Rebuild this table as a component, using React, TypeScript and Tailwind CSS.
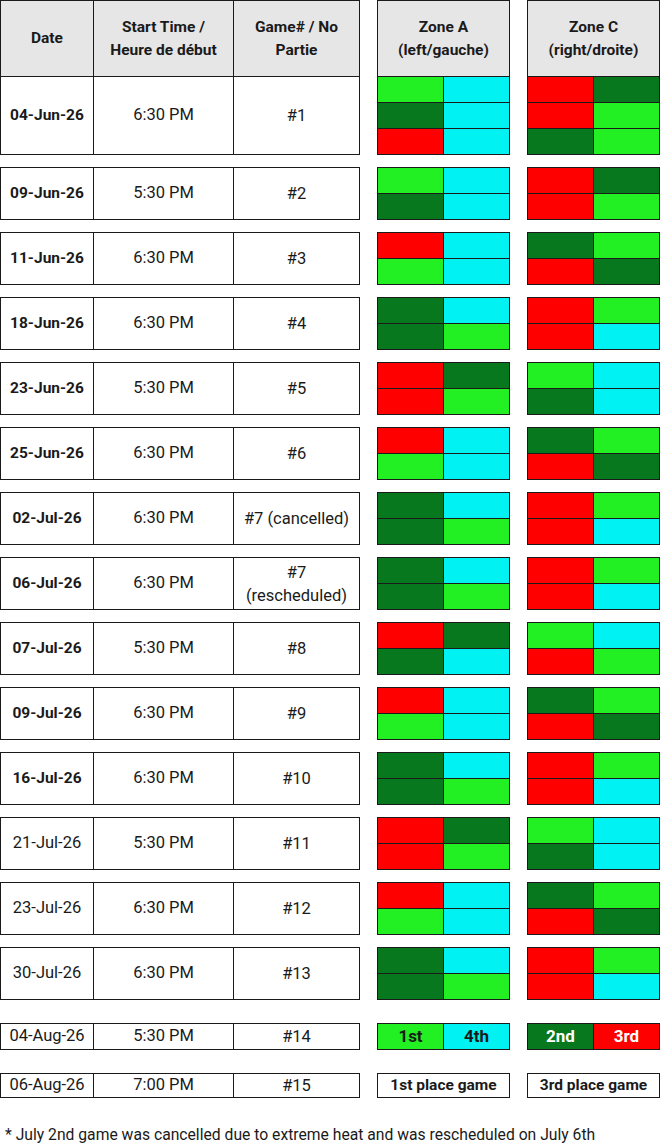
import React from 'react';

type C = 'lg' | 'dg' | 'r' | 'cy';

interface GameRow {
  date: string;
  time: string;
  game: React.ReactNode;
  bold: boolean;
  zoneA: C[][];
  zoneC: C[][];
}

const fill: Record<C, string> = {
  lg: 'bg-[#22f022]',
  dg: 'bg-[#07781e]',
  r: 'bg-[#ff0000]',
  cy: 'bg-[#00f2f2]',
};

const rows: GameRow[] = [
  { date: '09-Jun-26', time: '5:30 PM', game: '#2', bold: true, zoneA: [['lg', 'cy'], ['dg', 'cy']], zoneC: [['r', 'dg'], ['r', 'lg']] },
  { date: '11-Jun-26', time: '6:30 PM', game: '#3', bold: true, zoneA: [['r', 'cy'], ['lg', 'cy']], zoneC: [['dg', 'lg'], ['r', 'dg']] },
  { date: '18-Jun-26', time: '6:30 PM', game: '#4', bold: true, zoneA: [['dg', 'cy'], ['dg', 'lg']], zoneC: [['r', 'lg'], ['r', 'cy']] },
  { date: '23-Jun-26', time: '5:30 PM', game: '#5', bold: true, zoneA: [['r', 'dg'], ['r', 'lg']], zoneC: [['lg', 'cy'], ['dg', 'cy']] },
  { date: '25-Jun-26', time: '6:30 PM', game: '#6', bold: true, zoneA: [['r', 'cy'], ['lg', 'cy']], zoneC: [['dg', 'lg'], ['r', 'dg']] },
  { date: '02-Jul-26', time: '6:30 PM', game: '#7 (cancelled)', bold: true, zoneA: [['dg', 'cy'], ['dg', 'lg']], zoneC: [['r', 'lg'], ['r', 'cy']] },
  {
    date: '06-Jul-26',
    time: '6:30 PM',
    game: (
      <>
        #7
        <br />
        (rescheduled)
      </>
    ),
    bold: true,
    zoneA: [['dg', 'cy'], ['dg', 'lg']],
    zoneC: [['r', 'lg'], ['r', 'cy']],
  },
  { date: '07-Jul-26', time: '5:30 PM', game: '#8', bold: true, zoneA: [['r', 'dg'], ['dg', 'cy']], zoneC: [['lg', 'cy'], ['r', 'lg']] },
  { date: '09-Jul-26', time: '6:30 PM', game: '#9', bold: true, zoneA: [['r', 'cy'], ['lg', 'cy']], zoneC: [['dg', 'lg'], ['r', 'dg']] },
  { date: '16-Jul-26', time: '6:30 PM', game: '#10', bold: true, zoneA: [['dg', 'cy'], ['dg', 'lg']], zoneC: [['r', 'lg'], ['r', 'cy']] },
  { date: '21-Jul-26', time: '5:30 PM', game: '#11', bold: false, zoneA: [['r', 'dg'], ['r', 'lg']], zoneC: [['lg', 'cy'], ['dg', 'cy']] },
  { date: '23-Jul-26', time: '6:30 PM', game: '#12', bold: false, zoneA: [['r', 'cy'], ['lg', 'cy']], zoneC: [['dg', 'lg'], ['r', 'dg']] },
  { date: '30-Jul-26', time: '6:30 PM', game: '#13', bold: false, zoneA: [['dg', 'cy'], ['dg', 'lg']], zoneC: [['r', 'lg'], ['r', 'cy']] },
];

const Zone = ({ grid }: { grid: C[][] }) => (
  <div className="flex flex-col">
    {grid.map((pair, i) => (
      <div key={i} className={`flex h-[25px] ${i > 0 ? 'box-content border-t border-[#1a1a1a]' : ''}`}>
        <div className={`w-[65px] ${fill[pair[0]]}`} />
        <div className={`w-[66px] border-l border-[#1a1a1a] ${fill[pair[1]]}`} />
      </div>
    ))}
  </div>
);

const Cells = ({ date, time, game, bold, h }: { date: string; time: string; game: React.ReactNode; bold: boolean; h: string }) => (
  <div className={`flex ${h}`}>
    <div className={`w-[92px] flex items-center justify-center ${bold ? 'font-bold text-[15.5px]' : 'text-[16.5px]'}`}>{date}</div>
    <div className="w-[140px] border-l border-[#1a1a1a] flex items-center justify-center">{time}</div>
    <div className="w-[126px] border-l border-[#1a1a1a] flex items-center justify-center text-center leading-[23px]">{game}</div>
  </div>
);

export default function App() {
  return (
    <div
      className="w-[666px] min-h-[1146px] bg-white text-[#1a1a1a] text-[16.5px]"
      style={{ fontFamily: "Roboto, 'Liberation Sans', sans-serif" }}
    >
      <div className="flex flex-col gap-[12px]">
        {/* header + first game */}
        <div className="flex gap-[17px] items-start">
          <div className="w-[360px] border border-[#1a1a1a]">
            <div className="flex h-[75px] bg-[#e7e6e6] font-bold text-[15.5px] leading-[23px] text-center">
              <div className="w-[92px] flex items-center justify-center">Date</div>
              <div className="w-[140px] border-l border-[#1a1a1a] flex items-center justify-center">
                Start Time /<br />Heure de début
              </div>
              <div className="w-[126px] border-l border-[#1a1a1a] flex items-center justify-center">
                Game# / No<br />Partie
              </div>
            </div>
            <div className="border-t border-[#1a1a1a]">
              <Cells date="04-Jun-26" time="6:30 PM" game="#1" bold h="h-[77px]" />
            </div>
          </div>
          <div className="w-[133px] border border-[#1a1a1a]">
            <div className="h-[75px] bg-[#e7e6e6] font-bold text-[15.5px] leading-[23px] text-center flex items-center justify-center">
              Zone A<br />(left/gauche)
            </div>
            <div className="border-t border-[#1a1a1a]">
              <Zone grid={[['lg', 'cy'], ['dg', 'cy'], ['r', 'cy']]} />
            </div>
          </div>
          <div className="w-[133px] border border-[#1a1a1a]">
            <div className="h-[75px] bg-[#e7e6e6] font-bold text-[15.5px] leading-[23px] text-center flex items-center justify-center">
              Zone C<br />(right/droite)
            </div>
            <div className="border-t border-[#1a1a1a]">
              <Zone grid={[['r', 'dg'], ['r', 'lg'], ['dg', 'lg']]} />
            </div>
          </div>
        </div>

        {rows.map((row) => (
          <div key={row.date} className="flex gap-[17px] items-start">
            <div className="w-[360px] border border-[#1a1a1a]">
              <Cells date={row.date} time={row.time} game={row.game} bold={row.bold} h="h-[51px]" />
            </div>
            <div className="w-[133px] border border-[#1a1a1a]">
              <Zone grid={row.zoneA} />
            </div>
            <div className="w-[133px] border border-[#1a1a1a]">
              <Zone grid={row.zoneC} />
            </div>
          </div>
        ))}
      </div>

      {/* playoffs */}
      <div className="flex flex-col gap-[23px] mt-[23px]">
        <div className="flex gap-[17px] items-start">
          <div className="w-[360px] border border-[#1a1a1a]">
            <Cells date="04-Aug-26" time="5:30 PM" game="#14" bold={false} h="h-[25px]" />
          </div>
          <div className="w-[133px] border border-[#1a1a1a] flex h-[27px] font-bold text-[17px]">
            <div className="w-[65px] bg-[#22f022] flex items-center justify-center">1st</div>
            <div className="w-[66px] border-l border-[#1a1a1a] bg-[#00f2f2] flex items-center justify-center">4th</div>
          </div>
          <div className="w-[133px] border border-[#1a1a1a] flex h-[27px] font-bold text-[17px] text-white">
            <div className="w-[65px] bg-[#07781e] flex items-center justify-center">2nd</div>
            <div className="w-[66px] border-l border-[#1a1a1a] bg-[#ff0000] flex items-center justify-center">3rd</div>
          </div>
        </div>
        <div className="flex gap-[17px] items-start">
          <div className="w-[360px] border border-[#1a1a1a]">
            <Cells date="06-Aug-26" time="7:00 PM" game="#15" bold={false} h="h-[23px]" />
          </div>
          <div className="w-[133px] h-[25px] border border-[#1a1a1a] font-bold text-[15.5px] flex items-center justify-center">
            1st place game
          </div>
          <div className="w-[133px] h-[25px] border border-[#1a1a1a] font-bold text-[15.5px] flex items-center justify-center">
            3rd place game
          </div>
        </div>
      </div>

      <p className="mt-[25px] pl-[5px] text-[15.7px] leading-[24px]">
        * July 2nd game was cancelled due to extreme heat and was rescheduled on July 6th
      </p>
    </div>
  );
}
